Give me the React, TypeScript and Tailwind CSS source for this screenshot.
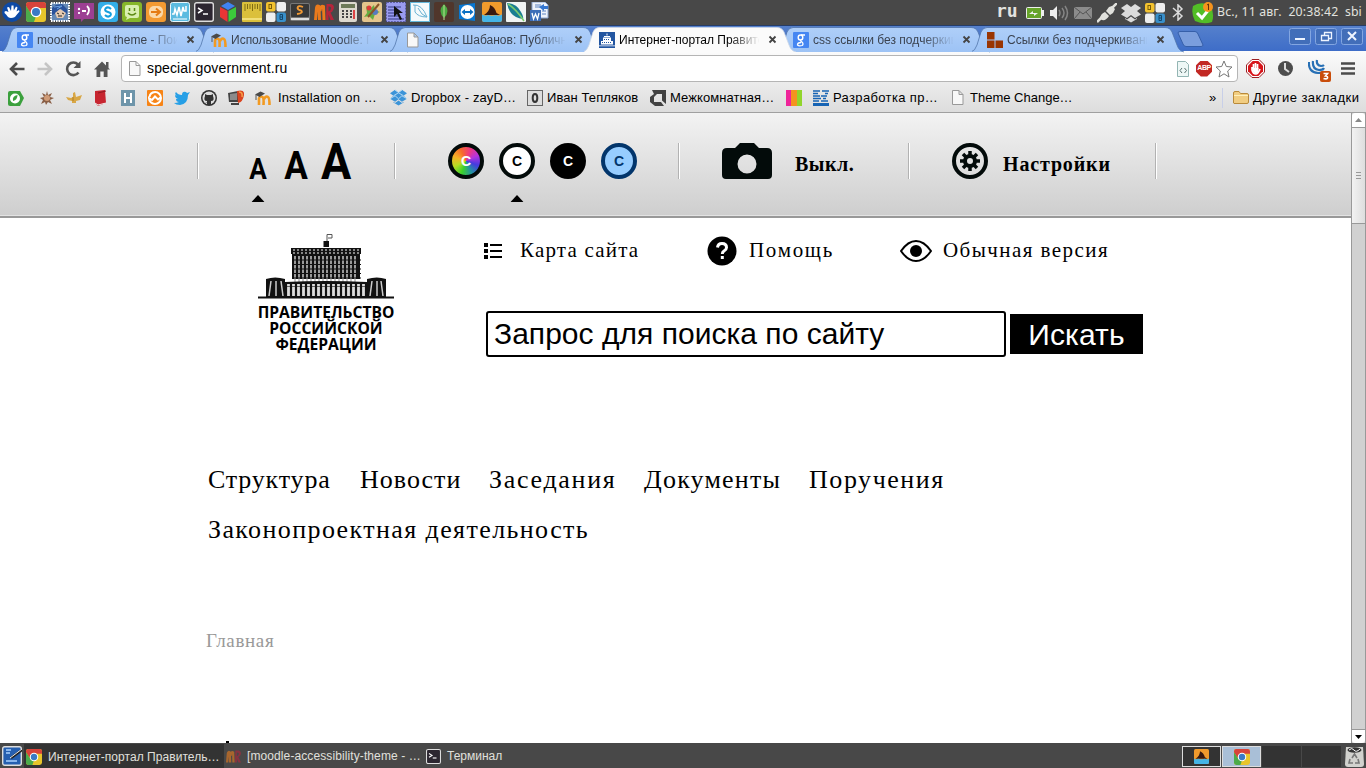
import React from "react";

type IconProps = { children: React.ReactNode; className?: string; box?: string };

const Icon = ({ children, className = "", box = "0 0 20 20" }: IconProps) => (
  <svg viewBox={box} className={`shrink-0 ${/(^| )(size|h)-/.test(className) ? "" : "size-5"} ${className}`} fill="none">{children}</svg>
);

const ChromeLogo = () => (
  <>
    <rect width="20" height="20" rx="3" fill="#e8c52b" />
    <path d="M0 3Q0 0 3 0H17Q20 0 20 3V6H10L5 12L0 4Z" fill="#d8433a" />
    <path d="M0 4L6 13L10 14L8 20H3Q0 20 0 17Z" fill="#4cab4b" />
    <circle cx="10" cy="10" r="5.3" fill="#fff" />
    <circle cx="10" cy="10" r="4" fill="#3b7ac5" />
  </>
);

const Terminal = () => (
  <>
    <rect x=".7" y=".7" width="18.6" height="18.6" rx="2" fill="#2c2630" stroke="#ddd" strokeWidth="1.4" />
    <path d="M4 6l4 2.5L4 11" stroke="#fff" strokeWidth="1.5" />
    <path d="M9 12h5" stroke="#fff" strokeWidth="1.5" />
  </>
);

const MoodleR = () => (
  <>
    <path d="M1.500 18L2.500 6Q3 3 5 4.500L5.500 18M6 9Q7 3 9.500 4.500L10 18" stroke="#e97a1c" strokeWidth="3" />
    <path d="M12.500 2H17Q21 3 19.500 7.500Q18.500 10 16.500 10.500L20 18H16.500L14.500 12.500V18H12ZM14.500 4.500V9.500Q17.500 8.500 17 5.500Q16.500 4.500 14.500 4.500" fill="#b5243b" />
  </>
);

const SharkFin = () => (
  <>
    <rect width="20" height="20" rx="2" fill="#f09a2c" />
    <path d="M2 13Q8 9 8 3Q13 5 14.500 11L18 13Z" fill="#3a1a10" />
    <path d="M0 12.500Q3 14.500 6 13Q10 14.500 14 13Q17 14.500 20 12.500V18Q20 20 18 20H2Q0 20 0 18Z" fill="#45b4e6" />
  </>
);

const MoodleHat = () => (
  <>
    <path d="M4 15V8.500Q5 5.500 7.500 7Q9 8 8.500 15M9 9Q11 5.500 13 7Q14.500 8 14.500 15" stroke="#f29a21" strokeWidth="2.600" />
    <path d="M0 4.500L5.500 1.500L10 3.500L4.500 7Z" fill="#4a4a4a" />
    <path d="M1 5V10" stroke="#555" />
  </>
);

const PageIcon = () => (
  <path d="M.5.5H7L11 4.500V14.500H.5ZM7 .5V4.500H11" fill="#f8f8f8" stroke="#999" />
);

const Cow = () => (
  <>
    <rect width="9.500" height="9.500" rx="2" fill="#f3c22f" />
    <rect x="10.500" width="9.500" height="9.500" rx="2" fill="#eee" />
    <rect y="10.500" width="9.500" height="9.500" rx="2" fill="#eee" />
    <rect x="10.500" y="10.500" width="9.500" height="9.500" rx="2" fill="#3990cb" />
    <rect x="3" y="2.500" width="2.500" height="4" stroke="#7b5d07" />
    <path d="M14 12.500h2.500v5H14zM14 15h2.500" stroke="#15466b" />
  </>
);

const DropboxShape = ({ fill }: { fill: string }) => (
  <path d="M6 1L0 5L4 8L0 11.500L6 15L10 12L14 15L20 11.500L16 8L20 5L14 1L10 4ZM4 15V16L10 19.500L16 16V15L14 16.500L10 13.500L6 16.500Z" fill={fill} />
);

const launchers: React.ReactNode[] = [
  <>
    <circle cx="10" cy="10" r="10" fill="#0d4aa6" />
    <path d="M2.500 11Q2 9 4 9L6.500 10L5 5.500L7 5L9 9L9.500 3.500L11.500 3.500L11.800 8.500L14 4.500L15.500 5.500L14.500 9.500L17 8L17.500 9.500L14.500 13Q13 16 9 16Q6 16 4.500 13Z" fill="#fff" />
  </>,
  <ChromeLogo />,
  <>
    <rect x="1" y="1" width="18" height="18" fill="#6488b5" stroke="#fff" strokeWidth="2" strokeDasharray="1.500 1" />
    <path d="M2 6L6 3L12 2L17 7L17 12L11 7L5 12L2 13Z" fill="#2a529b" />
    <path d="M5 11L10 7L16 11L13 16L7 16Z" fill="#e4c9b0" />
    <path d="M7 11l2 1m3-1l2 1M8 14h4" stroke="#222" />
    <path d="M4 5L12 4L7 7" stroke="#6fa3e0" />
  </>,
  <>
    <path d="M0 1H20V17H10L7 20V17H0Z" fill="#9c3f93" />
    <circle cx="5" cy="7" r="1.200" fill="#fff" /><path d="M5 10v2M8 9h4M13 4q4 4 0 9" stroke="#fff" strokeWidth="1.800" />
  </>,
  <>
    <rect width="20" height="20" rx="3" fill="#34aee8" />
    <circle cx="10" cy="10" r="7.500" fill="#fff" />
    <path d="M13 7Q10 4 7.500 6.500Q6 9 10 10Q14 11 12.500 13.500Q10 16 7 13" stroke="#169fdd" strokeWidth="2" />
  </>,
  <>
    <rect width="20" height="20" rx="3" fill="#86b62a" />
    <path d="M3 5Q3 3 5 3H15Q17 3 17 5V14Q17 16 15 16H8L4 18L5 15Q3 15 3 13Z" fill="#d9efb1" />
    <path d="M7.500 6v3m5-3v3M6 11q4 4 8 0" stroke="#5b8a13" strokeWidth="1.500" />
  </>,
  <>
    <rect width="20" height="20" rx="3" fill="#f39a31" />
    <rect x="3" y="4" width="14" height="12" rx="5" fill="#fbd9a9" />
    <path d="M5 10h8M10 6.500L14 10L10 13.500" stroke="#e57b12" strokeWidth="2" />
  </>,
  <>
    <rect x=".5" y=".5" width="19" height="19" rx="2" fill="#5bbbe0" stroke="#e7f6fc" />
    <path d="M2 12H4L5 7L7 13L9 5L11 14L13 5L14 9H16V4" stroke="#fff" strokeWidth="1.500" /><path d="M3 17h14" stroke="#fff" />
  </>,
  <Terminal />,
  <>
    <path d="M10 0L17 4L10 8L3 4Z" fill="#3f83f2" />
    <path d="M2 5L9.500 9V20L2 15Z" fill="#e93535" />
    <path d="M18 5L10.500 9V20L18 15Z" fill="#3ccb3b" />
  </>,
  <>
    <rect width="20" height="20" rx="1" fill="#dbc03b" />
    <path d="M3 2v7M5.500 2v5M8 2v5M10.500 2v7M13 2v5M15.500 2v5M18 2v7" stroke="#806c12" />
    <path d="M0 17h20" stroke="#f1df78" strokeWidth="2" />
  </>,
  <Cow />,
  <>
    <rect y="1" width="20" height="18" rx="2" fill="#777" /><rect x="1" y="2" width="18" height="13" rx="1" fill="#373737" />
    <path d="M13 5Q8 3 7.500 6Q8 8 11 8.500Q14 11 7 12" stroke="#f39a33" strokeWidth="1.800" /><path d="M1 17h18" stroke="#ddd" strokeWidth="2" />
  </>,
  <MoodleR />,
  <>
    <rect x="1" width="18" height="20" rx="2" fill="#ddd9cf" /><rect x="3" y="2" width="14" height="4" fill="#6d7958" />
    <path d="M4 9h2m2 0h2m2 0h2M4 12h2m2 0h2m2 0h2M4 15h2m2 0h2m2 0h2" stroke="#444" strokeWidth="1.800" /><path d="M16 8v9" stroke="#d44" strokeWidth="2" />
  </>,
  <>
    <rect width="20" height="20" rx="2" fill="#e4c58c" />
    <path d="M4 4l4 3 4-4 1 5 5 2-5 2-2 6-4-4-5 1 3-4z" fill="#65ad42" /><circle cx="7" cy="6" r="2.500" fill="#dd3a37" /><circle cx="13" cy="10" r="3" fill="#557bc0" /><path d="M6 15L17 2" stroke="#8a5426" strokeWidth="2" />
  </>,
  <>
    <rect width="20" height="20" rx="1" fill="#9a9cf0" stroke="#24245c" strokeDasharray="2 1" />
    <path d="M2 5h13M2 8h7M2 11h8M2 14h10M2 17h16" stroke="#333982" /><path d="M8 4L17 11H13L16 17L14 18L11 12L8 15Z" fill="#111" />
  </>,
  <>
    <rect x=".5" y=".5" width="19" height="19" fill="#f5fafb" stroke="#65b7da" />
    <path d="M3 3Q12 2 17 15L12 12M5 3V10Q8 15 17 15M8 6L12 12" stroke="#6ab3d3" />
  </>,
  <>
    <rect width="20" height="20" rx="2" fill="#50362b" /><path d="M10 2Q17 9 10 16Q3 9 10 2Z" fill="#4cab42" /><path d="M10 3V18" stroke="#b9dd93" />
  </>,
  <>
    <path d="M1 3L17 1V19L1 17Z" fill="#0878d3" /><circle cx="9.500" cy="10" r="7" fill="#fff" />
    <path d="M3.500 10L7 7V9H12V7L15.500 10L12 13V11H7V13Z" fill="#0b71c4" />
  </>,
  <SharkFin />,
  <>
    <rect width="20" height="20" rx="1" fill="#f1f4f3" /><path d="M1 1Q11 2 15 10Q18 15 17 17Q9 16 5 11Q2 7 1 1Z" fill="#197e91" /><path d="M2 2Q10 7 18 19" stroke="#7acb6e" strokeWidth="1.500" />
  </>,
  <>
    <path d="M2 0H15L18 3V16H2Z" fill="#eef3fb" stroke="#8ca5cf" /><path d="M5 3h6M5 5h8M12 9h4M12 12h4" stroke="#5d83c0" />
    <rect y="8" width="11" height="11" fill="#3d6eb8" /><path d="M2 11l1.500 6L5.500 12L7.500 17L9 11" stroke="#fff" strokeWidth="1.300" /><path d="M9 5l5-3v2h4v3h-4v2z" fill="#3476d0" />
  </>,
];

const GoogleG = () => (
  <>
    <rect width="16" height="16" rx="1" fill="#4586f2" />
    <ellipse cx="7.500" cy="5.500" rx="2.300" ry="2.500" stroke="#fff" strokeWidth="1.400" />
    <path d="M8 3h4M8 8Q7 9 9 10Q11 12 9 13.500Q6 14.500 4.500 13Q4.500 10.500 8 10.500" stroke="#fff" strokeWidth="1.300" />
  </>
);

const GovIcon = () => (
  <>
    <rect width="16" height="16" fill="#2255a0" />
    <path d="M7.500 1.500h1v2h-1zM5 4h6v1H5zM4 5.500h8v4H4zM2 9h12v3.500H2zM0 13.500h16v.8H0z" fill="#fff" />
    <path d="M5 7.500h6M3 10.500h10" stroke="#2255a0" strokeDasharray="1 1" />
  </>
);

const Blocks = () => <path d="M0 0H7.500V7.500H0ZM0 8.500H7.500V16H0ZM8.500 8.500H16V16H8.500Z" fill="#993502" />;

const tabs = [
  { label: "moodle install theme - Поиск", icon: <GoogleG />, box: "0 0 16 16" },
  { label: "Использование Moodle: Про", icon: <MoodleHat />, box: "0 0 16 16" },
  { label: "Борис Шабанов: Публичные", icon: <PageIcon />, box: "-2 0 16 15" },
  { label: "Интернет-портал Правител", icon: <GovIcon />, box: "0 0 16 16", active: true },
  { label: "css ссылки без подчеркива", icon: <GoogleG />, box: "0 0 16 16" },
  { label: "Ссылки без подчеркивания", icon: <Blocks />, box: "0 0 16 16" },
];

const Tab = ({ tab }: { tab: (typeof tabs)[number] }) => (
  <div className={`relative flex h-[25px] w-[194px] shrink-0 items-center pl-3 ${tab.active ? "z-10" : ""}`}>
    <svg className="absolute top-0 -left-[3px] h-[26px] w-[214px]" viewBox="0 0 214 26" fill="none">
      <defs>
        <linearGradient id="tabBlue" x1="0" y1="0" x2="0" y2="1"><stop stopColor="#afcff9" /><stop offset="1" stopColor="#9dc3f5" /></linearGradient>
      </defs>
      <path d="M-1 25Q3 24 5 18L9 5Q11 .5 15 .5H193Q198 .5 200 5L205 18Q207 24 212 25" fill={tab.active ? "#fbfbfb" : "url(#tabBlue)"} stroke={tab.active ? "#cfd8e5" : "#4d71a7"} strokeOpacity=".75" />
      {tab.active && <path d="M0 25.500H213" stroke="#fbfbfb" />}
    </svg>
    <Icon className="relative size-4" box={tab.box}>{tab.icon}</Icon>
    <span className={`relative ml-1 w-[140px] overflow-hidden text-[12px] leading-4 whitespace-nowrap [mask-image:linear-gradient(to_right,black_110px,transparent_141px)] ${tab.active ? "text-black" : "text-[#3b4350]"}`}>{tab.label}</span>
    <Icon className="relative ml-[9px] size-[9px]" box="0 0 9 9"><path d="M1.500 1.500L7.500 7.500M7.500 1.500L1.500 7.500" stroke="#444" strokeWidth="1.800" /></Icon>
  </div>
);

const SystemPanel = () => (
  <div className="flex h-[25px] items-center bg-[#484848] pl-0.5 text-[#e2e2df]">
    <div className="-mt-px flex w-[994px] shrink-0 gap-1">{launchers.map((art, i) => <Icon key={i}>{art}</Icon>)}</div>
    <span className="w-[30px] shrink-0 pb-[3px] font-['DejaVu_Sans_Mono',monospace] text-[18px] leading-5 font-bold">ru</span>
    <Icon className="h-3 w-[18px]" box="0 0 18 12"><rect x=".5" y=".5" width="15" height="11" rx="1" fill="#67a42a" stroke="#eee" /><path d="M16 3h2v6h-2M3 7l4-3v2h5L8 9V7z" fill="#eee" /></Icon>
    <Icon className="ml-1.5 h-4 w-[19px]" box="0 0 19 16"><path d="M0 5h3l4-4v14l-4-4H0z" fill="#eee" /><path d="M9 5q2 3 0 6M12 3q4 5 0 10M15 1q5 7 0 14" stroke="#858585" strokeWidth="1.500" /></Icon>
    <Icon className="ml-[5px] h-3 w-[18px]" box="0 0 18 12"><rect width="18" height="12" fill="#8b8b8b" /><path d="M0 0l9 7 9-7M0 12l6-7m12 7l-6-7" stroke="#555" /></Icon>
    <Icon className="ml-[5px]"><path d="M0 19l5-5M15 5l5-5" stroke="#e1e1dc" strokeWidth="2.500" /><path d="M3 16q0-5 5-7l4 4q-3 5-7 4zM9 8l3-4 3-1 3 3-2 4-3 2z" fill="#e1e1dc" /></Icon>
    <Icon className="ml-1"><DropboxShape fill="#dcdcdc" /></Icon>
    <Icon className="ml-1"><Cow /></Icon>
    <Icon className="ml-1.5 h-[17px] w-[14px]" box="0 0 14 17"><path d="M2 4l9 8-4 4V1l4 4-9 8" stroke="#ddd" strokeWidth="1.500" /></Icon>
    <Icon className="ml-[7px] size-[22px]" box="0 0 22 22"><path d="M1 4Q8-1 18 3Q23 11 20 20Q12 23 3 19Q-1 12 1 4Z" fill="#52bd26" /><path d="M5 11l5 5 8-10" stroke="#fff" strokeWidth="3" /><circle cx="16" cy="5" r="5" fill="#f6931d" /><path d="M15 3l1.500-1v6" stroke="#663209" /></Icon>
    <span className="ml-[3px] w-[128px] shrink-0 pb-0.5 font-['Noto_Sans',sans-serif] text-[12.3px] leading-5 tracking-[.14px] whitespace-pre">Вс., 11 авг.  20:38:42</span>
    <span className="pb-0.5 font-['Noto_Sans',sans-serif] text-[12.300px] leading-5">sbi</span>
  </div>
);

const TabStrip = () => (
  <div className="flex h-[26px] border-t border-[#263d68] bg-linear-to-b from-[#5580cc] to-[#3e6dc8] pt-px pl-[5px]">
    {tabs.map((t) => <Tab key={t.label} tab={t} />)}
    <Icon className="mt-1 ml-2 h-4 w-[28px]" box="0 0 28 16"><path d="M3 .5H18Q20 .5 21 3L26 14Q26 15.500 24 15.500H9Q7 15.500 6 13L1 2Q1 .5 3 .5Z" fill="#7b9edd" stroke="#365fa9" /></Icon>
    <div className="mt-px ml-auto flex gap-1 pr-[3px]">
      {["M6 11H16", "M6.500 7.500H13.500V12.500H6.500ZM9.500 7V4.500H16.500V10.500H14", "M7 4L15 12M15 4L7 12"].map((d, i) => (
        <Icon key={d} className="h-[17px] w-[22px]" box="0 0 22 17"><rect x=".5" y=".5" width="21" height="16" rx="2" fill="#426eb9" stroke="#83a6e1" /><path d={d} stroke="#eef4ff" strokeWidth={i === 1 ? 1.3 : 2} /></Icon>
      ))}
    </div>
  </div>
);

const AddressRow = () => (
  <div className="flex h-[35px] items-center pl-2">
    <Icon className="h-4 w-[18px]" box="0 0 18 16"><path d="M16.500 8H3M9 2L3 8L9 14" stroke="#4b4b4b" strokeWidth="2.600" /></Icon>
    <Icon className="ml-2.5 h-4 w-[18px]" box="0 0 18 16"><path d="M1.500 8H15M9 2L15 8L9 14" stroke="#c5c5c5" strokeWidth="2.600" /></Icon>
    <Icon className="ml-2.5 size-[18px]" box="0 0 18 18"><path d="M14.500 12.500A6.300 6.300 0 1 1 14 4.500" stroke="#555" strokeWidth="2.600" /><path d="M16.500 1V8H9.500Z" fill="#555" /></Icon>
    <Icon className="ml-3 size-4" box="0 0 16 16"><path d="M8 .5L16 8.500H13.500V16H9.700V10.500H6.300V16H2.500V8.500H0Z M12 1h2.500v6L12 5z" fill="#555" /></Icon>
    <div className="ml-[11px] flex h-[27px] w-[1117px] items-center rounded-[4px] border border-[#b5b5b5] bg-white pr-1 pl-[7px]">
      <Icon className="h-[15px] w-3" box="0 0 12 15"><PageIcon /></Icon>
      <span className="ml-1.5 pb-0.5 text-[14px] leading-5 tracking-[.13px] text-black">special.government.ru</span>
      <Icon className="ml-auto h-4 w-3" box="0 0 12 16"><path d="M.5.5H8.500L11.500 3.500V15.500H.5Z" fill="#eef7f6" stroke="#93b5b3" /><path d="M5 7L3 9.500L5 12M7.500 7L9.500 9.500L7.500 12" stroke="#59706e" /></Icon>
      <span className="ml-[7px] flex size-4 items-center justify-center bg-[#c22823] text-[7px] font-bold tracking-[-.5px] text-white [clip-path:polygon(30%_0,70%_0,100%_30%,100%_70%,70%_100%,30%_100%,0_70%,0_30%)]">ABP</span>
      <Icon className="ml-[3px] size-[18px]" box="0 0 18 18"><path d="M9 1L11.300 6.500L17 7L12.700 11L14 17L9 13.800L4 17L5.300 11L1 7L6.700 6.500Z" fill="#fff" stroke="#777" /></Icon>
    </div>
    <Icon className="ml-2 size-[19px]" box="0 0 19 19"><path d="M6 .5H13L18.500 6V13L13 18.500H6L.5 13V6Z" fill="#fff" stroke="#9c2024" /><path d="M6.700 2H12.300L17 6.700V12.300L12.300 17H6.700L2 12.300V6.700Z" fill="#d7141a" /><path d="M6 8v3q1 4 4 4 2 0 4-5M7.500 10V5M9.500 9V4M11.500 10V5" stroke="#fff" strokeWidth="1.700" /><path d="M6.500 9h6v4l-3 2-3-3z" fill="#fff" /></Icon>
    <Icon className="ml-3 size-[17px]" box="0 0 17 17"><circle cx="8.500" cy="8.500" r="7.500" fill="#4d4d4d" /><path d="M8 3v6l4 3" stroke="#ddd" strokeWidth="2" /></Icon>
    <Icon className="mt-1 ml-3.5 h-[23px] w-[23px]" box="0 0 23 23"><path d="M1 3q-1 10 9 11 5 0 6-2M5 2q-1 8 6 9 4 0 5-2M9 1q-1 5 4 6 2 0 3-1" stroke="#2870b5" strokeWidth="2.200" /><rect x="12" y="12" width="11" height="11" rx="2" fill="#c94d0b" /><path d="M15.500 14.500h4l-2 2.500q2.500 0 2 2-1 1.500-4 .5" stroke="#fff" strokeWidth="1.600" /></Icon>
    <Icon className="ml-2.5 h-[13px] w-[14px]" box="0 0 14 13"><path d="M0 1.500H14M0 6.500H14M0 11.500H14" stroke="#4b4b4b" strokeWidth="2.700" /></Icon>
  </div>
);

const smallMarks: React.ReactNode[] = [
  <><path d="M2 1H12L16 8L12 16H2Q0 16 0 14V3Q0 1 2 1" fill="#3ba03d" /><circle cx="7" cy="8.500" r="5" fill="#fff" /><path d="M9.500 5Q4 6 5 11Q9.500 10 9.500 5M4.500 12L7 9" fill="#3ba03d" /></>,
  <><path d="M8 1l1 4 4-2-2 4 4 1-4 2 2 4-4-2-2 3-1-3-4 2 2-4-3-2 4-1-2-4 4 2z" fill="#895e45" /><circle cx="8" cy="8" r="3" fill="#cf9b77" /></>,
  <><path d="M0 7l5 1 2-1V3l2-1 1 5 6-2-2 5-4 1v2H6v-2l-4-1z" fill="#d8a746" /><path d="M7 7v4" stroke="#b37d21" /></>,
  <><path d="M2 1L12 0L13 13L5 16L2 13Z" fill="#c72530" /><path d="M2 13L5 15L13 13" stroke="#eee" /><path d="M5 3L13 1" stroke="#8d1a22" /></>,
  <><rect x="1" width="14" height="16" fill="#6e95aa" /><path d="M5 3v10M11 3v10M5 8h6" stroke="#fff" strokeWidth="2" /></>,
  <><rect width="16" height="16" rx="1" fill="#f78416" /><path d="M8 2A6 6 0 1 1 2 8L5 10L8 6.500L11 9.500L14 7" stroke="#fff" strokeWidth="2" /><path d="M2.500 7Q3 2.500 8 2" stroke="#fff" strokeWidth="2" /></>,
  <path d="M0 13Q3 13 5 12Q2 12 2 9H4Q1 8 1 5L3 6Q0 4 2 2Q4 5 8 5Q8 1 12 2L13 3L16 2L14 5Q14 14 6 15Q2 15 0 13Z" fill="#269fe6" />,
  <><circle cx="8" cy="8" r="8" fill="#333" /><circle cx="8" cy="8" r="6.500" fill="#ddd" /><path d="M4 4L6 5H10L12 4V6Q14 11 10 11V15H6V13L4 12L6 12.500V11Q2 11 4 6Z" fill="#333" /></>,
  <><path d="M0 3L10 1V12L1 12Z" fill="#444" /><path d="M2 4L9 3V10L2 10Z" fill="#8b8b8b" /><path d="M9 1q8-2 7 4-1 7-6 8z" fill="#da4420" /><path d="M11 2q4 0 3 5" stroke="#f6a24a" strokeWidth="1.500" /><path d="M3 14h8" stroke="#444" strokeWidth="2" /></>,
  <MoodleHat />,
];

const markText = "shrink-0 whitespace-nowrap text-[13px] leading-4 text-black";

const BookmarkBar = () => (
  <div className="flex h-[26px] items-center pb-[3px] pl-2">
    <Icon className="mr-[15px] size-4" box="0 0 16 16">{smallMarks[0]}</Icon>
    <div className="flex shrink-0 gap-[11px]">{smallMarks.slice(1).map((m, i) => <Icon key={i} className="size-4" box="0 0 16 16">{m}</Icon>)}</div>
    <span className={`ml-[7px] w-[112px] tracking-[.12px] ${markText}`}>Installation on …</span>
    <Icon className="size-[17px]"><DropboxShape fill="#3c94d8" /><path d="M6 1.500L10 4L14 1.500M0 11.500L6 8L10 11.500L14 8L20 11.500M4 8L10 4.500L16 8" stroke="#c3e2f7" /></Icon>
    <span className={`ml-[4px] w-[116px] tracking-[.12px] ${markText}`}>Dropbox - zayD…</span>
    <Icon className="size-4" box="0 0 16 16"><rect x=".5" y=".5" width="15" height="15" fill="#ddd" stroke="#666" /><ellipse cx="8" cy="8" rx="2.300" ry="4" stroke="#333" strokeWidth="2" /></Icon>
    <span className={`ml-1 w-[103px] tracking-[.08px] ${markText}`}>Иван Тепляков</span>
    <Icon className="size-4" box="0 0 16 16"><path d="M2 0H16V14L12 10.500V4H7L4 7V12H11L14 16H5L0 12V7L4 4Z" fill="#424242" /></Icon>
    <span className={`ml-1 w-[116px] tracking-[.08px] ${markText}`}>Межкомнатная…</span>
    <Icon className="size-4" box="0 0 16 16"><path d="M0 0h5v16H0z" fill="#ef249a" /><path d="M5 0h6v16H5z" fill="#f49320" /><path d="M11 0h5v16h-5z" fill="#91d52c" /></Icon>
    <Icon className="ml-[11px] size-4" box="0 0 16 16"><path d="M0 1h7M0 3.500h5M0 6h7M0 8.500h8M0 11h6M9 1h7M12 3.500h3M8 6h6M10 8.500h3M8 11h7" stroke="#1764b4" strokeWidth="1.500" /><path d="M0 13h16v3H0z" fill="#1764b4" /></Icon>
    <span className={`ml-1 w-[119px] tracking-[.35px] ${markText}`}>Разработка пр…</span>
    <Icon className="h-[15px] w-3" box="0 0 12 15"><PageIcon /></Icon>
    <span className={`ml-1.5 w-[239px] ${markText}`}>Theme Change…</span>
    <span className="w-[13px] shrink-0 text-[13px] leading-4">»</span>
    <i className="h-5 w-px shrink-0 bg-[#c8cfe8]" />
    <Icon className="ml-[10px] h-[13px] w-4" box="0 0 16 13"><path d="M.5 12V2Q.5.5 2 .5H6L7.500 2.500H14Q15.500 2.500 15.500 4V11Q15.500 12.500 14 12.500H1Z" fill="#f1cd82" stroke="#b98a3b" /><path d="M1 4.500h14" stroke="#fff0bb" /></Icon>
    <span className={`ml-1 tracking-[.45px] ${markText}`}>Другие закладки</span>
  </div>
);

const BrowserChrome = () => (
  <>
    <TabStrip />
    <div className="h-[62px] border-b border-[#a0a0a0] bg-linear-to-b from-[#fbfbfb] to-[#dddddd]">
      <AddressRow />
      <BookmarkBar />
    </div>
  </>
);

const Divider = () => <i className="h-9 w-0.5 shrink-0 border-r border-l border-r-white border-l-[#b2b2b2]" />;
const Pointer = () => <svg className="absolute top-[52px] left-1/2 h-[7px] w-[13px] -translate-x-1/2" viewBox="0 0 13 7"><path d="M6.500 0L13 7H0Z" fill="#000" /></svg>;
const letter = "absolute left-1/2 -translate-x-1/2 scale-x-90 font-['Roboto',sans-serif] font-bold text-black";

const AccessibilityBar = () => (
  <div className="flex h-[105px] items-start border-b-2 border-[#999] bg-linear-to-b from-[#f3f3f3] to-[#cecece] pt-[30px] pl-[197px] shadow-[inset_0_-1px_0_#e3e3e3]">
    <Divider />
    <div className="ml-[50px] flex h-9">
      <div className="relative w-[18px]"><b className={`${letter} -bottom-[2px] text-[29px] leading-[23px]`}>A</b><Pointer /></div>
      <div className="relative ml-[17px] w-6"><b className={`${letter} -bottom-[3px] text-[39px] leading-[31px]`}>A</b></div>
      <div className="relative ml-[13px] w-[30px]"><b className={`${letter} -bottom-[3px] text-[50px] leading-[40px]`}>A</b></div>
    </div>
    <i className="w-[43px]" /><Divider />
    <div className="ml-[52px] flex gap-[15px] text-[14px] font-bold">
      <div className="flex size-9 items-center justify-center rounded-full border-4 border-[#030b0a] bg-[conic-gradient(from_20deg,#f03980,#b333e0,#453be0,#2394a0,#3bd32b,#b7dc23,#f5b326,#f76a2c,#f03980)] text-white">C</div>
      <div className="relative"><div className="flex size-9 items-center justify-center rounded-full border-4 border-[#030b0a] bg-white text-black">C</div><Pointer /></div>
      <div className="flex size-9 items-center justify-center rounded-full bg-black text-white">C</div>
      <div className="flex size-9 items-center justify-center rounded-full border-4 border-[#02356b] bg-[#97cdff] text-[#02356b]">C</div>
    </div>
    <i className="w-[41px]" /><Divider />
    <Icon className="ml-[42px] h-9 w-[50px]" box="0 0 50 36"><path fillRule="evenodd" d="M5 5H13L18 0H32L37 5H45Q50 5 50 10V32Q50 36 46 36H4Q0 36 0 32V10Q0 5 5 5ZM25 11.500A9.500 9.500 0 1 0 25 30.500A9.500 9.500 0 1 0 25 11.500Z" fill="#030b0a" /></Icon>
    <b className="mt-[7px] ml-[23px] w-[113px] font-['Liberation_Serif',serif] text-[20px] leading-7 tracking-[.5px]">Выкл.</b>
    <Divider />
    <Icon className="ml-[42px] size-9" box="0 0 36 36">
      <circle cx="18" cy="18" r="16" stroke="#030b0a" strokeWidth="4" />
      <circle cx="18" cy="18" r="5" stroke="#030b0a" strokeWidth="4" />
      <path d="M18 8V13M18 23V28M8 18H13M23 18H28M11 11L14.500 14.500M21.500 21.500L25 25M11 25L14.500 21.500M21.500 14.500L25 11" stroke="#030b0a" strokeWidth="3.500" />
    </Icon>
    <b className="mt-[7px] ml-[15px] w-[152px] font-['Liberation_Serif',serif] text-[20px] leading-7 tracking-[.85px]">Настройки</b>
    <Divider />
  </div>
);

const GovernmentLogo = () => (
  <div className="flex w-[136px] flex-col items-center font-['Open_Sans',sans-serif] text-[15.600px] leading-[16px] font-bold text-black">
    <svg className="h-[66px] w-[136px]" viewBox="0 0 136 66" fill="none">
      <path d="M69 9V0.500H74V4H70" stroke="#555" /><path d="M65.500 7h5.500v6h-5.500z" fill="#111" />
      <path d="M33 14H103V20H102V45H34V20H33Z" fill="#111" />
      <path d="M36 15V20M40 15V20M44 15V20M48 15V20M52 15V20M56 15V20M60 15V20M64 15V20M68 15V20M72 15V20M76 15V20M80 15V20M84 15V20M88 15V20M92 15V20M96 15V20M100 15V20" stroke="#aaa" strokeWidth="1.500" />
      <path d="M37 22V48M41 22V48M45 22V48M49 22V48M53 22V48M57 22V48M61 22V48M65 22V48M69 22V48M73 22V48M77 22V48M81 22V48M85 22V48M89 22V48M93 22V48M97 22V48" stroke="#bbb" strokeWidth="1.600" />
      <path d="M34 17.500H103M34 26H103M34 30.500H103M34 35H103M34 39.500H103M34 44H103" stroke="#111" />
      <path d="M8 45Q17 42 27 45V64H8ZM109 45Q119 42 128 45V64H109Z" fill="#111" />
      <path d="M13 47L11 62M18 47V62M23 47L25 62M114 47L112 62M119 47V62M123 47L125 62" stroke="#ccc" strokeWidth="1.500" />
      <path d="M27 48Q68 46 109 48V64H27Z" fill="#111" />
      <path d="M30.500 50V62M35.500 50V62M40.500 50V62M45.500 50V62M50.500 50V62M55.500 50V62M60.500 50V62M65.500 50V62M70.500 50V62M75.500 50V62M80.500 50V62M85.500 50V62M90.500 50V62M95.500 50V62M100.500 50V62M105.500 50V62" stroke="#ddd" strokeWidth="2.800" />
      <path d="M27 52.500H109" stroke="#111" strokeWidth=".6" />
      <path d="M0 63.500H136" stroke="#111" strokeWidth="2" />
    </svg>
    <div className="pt-[4px] whitespace-nowrap">ПРАВИТЕЛЬСТВО</div>
    <div>РОССИЙСКОЙ</div>
    <div>ФЕДЕРАЦИИ</div>
  </div>
);

const QuickLinks = () => (
  <div className="flex h-[30px] items-center font-['Liberation_Serif',serif] text-[21px] leading-[28px] tracking-[1.200px] whitespace-nowrap">
    <Icon className="h-4 w-[18px]" box="0 0 18 16"><path d="M0 0h4v4H0zM6 1h12v2H6zM0 6h4v4H0zM6 7h12v2H6zM0 12h4v4H0zM6 13h12v2H6z" fill="#000" /></Icon>
    <span className="ml-[18px] w-[187px] pb-0.5">Карта сайта</span>
    <Icon className="size-[30px]" box="0 0 30 30"><circle cx="15" cy="15" r="14.500" fill="#000" /><path d="M10.500 11.500Q11 7.500 15 7.500Q19.500 7.500 19.500 11.500Q19.500 13.500 17 15Q15.300 16 15.300 18" stroke="#fff" strokeWidth="3" /><path d="M13.800 20h3v3h-3z" fill="#fff" /></Icon>
    <span className="ml-3 w-[151px] pb-0.5 tracking-[1.700px]">Помощь</span>
    <Icon className="h-[22px] w-8" box="0 0 32 22"><path d="M1 11Q8 1 16 1Q24 1 31 11Q24 21 16 21Q8 21 1 11Z" stroke="#000" strokeWidth="2" /><circle cx="16" cy="11" r="6" fill="#000" /></Icon>
    <span className="ml-[11px] pb-0.5 tracking-[1.450px]">Обычная версия</span>
  </div>
);

const SiteSearch = () => (
  <div className="mt-[45px] ml-0.5 flex items-center gap-1 text-[30px] leading-10">
    <div className="h-[46px] w-[520px] rounded-[3px] border-2 border-black bg-white pt-px pl-[6px] tracking-[.03px] text-black">Запрос для поиска по сайту</div>
    <div className="h-10 w-[133px] bg-black pt-px text-center tracking-[.1px] text-white">Искать</div>
  </div>
);

const PortalPage = () => (
  <main className="h-[630px] w-[1351px] overflow-hidden bg-white text-black">
    <AccessibilityBar />
    <div className="flex h-[237px] pt-[16px] pl-[258px]">
      <GovernmentLogo />
      <div className="ml-[90px] pt-0.5"><QuickLinks /><SiteSearch /></div>
    </div>
    <nav className="flex flex-wrap pl-[208px] font-['Liberation_Serif',serif] text-[26px] leading-[50px] tracking-[.7px] whitespace-nowrap">
      <span className="w-[152px] tracking-[.820px]">Структура</span>
      <span className="w-[129px] tracking-[1px]">Новости</span>
      <span className="w-[155px] tracking-[1.700px]">Заседания</span>
      <span className="w-[165px] tracking-[1.200px]">Документы</span>
      <span className="w-[500px] tracking-[1.550px]">Поручения</span>
      <span className="tracking-[1.400px]">Законопроектная деятельность</span>
    </nav>
    <div className="pt-[72px] pl-[206px] font-['Liberation_Serif',serif] text-[19px] leading-7 tracking-[.65px] text-[#999]">Главная</div>
    <i className="mt-[86px] ml-[226px] block h-0.5 w-[3px] bg-black" />
  </main>
);

const Scrollbar = () => (
  <div className="flex w-[15px] flex-col border-x border-[#999] bg-[#d1d1d1]">
    <div className="flex h-[14px] items-center justify-center rounded-t-[3px] bg-white"><Icon className="h-1 w-[7px]" box="0 0 7 4"><path d="M3.500 0L7 4H0Z" fill="#888" /></Icon></div>
    <div className="flex h-[97px] flex-col items-center justify-center gap-0.5 border-y border-[#999] bg-linear-to-r from-[#f2f2f2] to-[#dedede]">
      <i className="h-px w-[5px] bg-[#999]" /><i className="h-px w-[5px] bg-[#999]" /><i className="h-px w-[5px] bg-[#999]" />
    </div>
    <div className="mt-auto flex h-[14px] items-center justify-center rounded-b-[3px] border-t border-[#999] bg-white"><Icon className="h-1 w-[7px]" box="0 0 7 4"><path d="M0 0H7L3.500 4Z" fill="#000" /></Icon></div>
  </div>
);

const Taskbar = () => (
  <div className="flex h-[25px] items-center bg-[#484848] pt-px text-[12px] leading-5 whitespace-nowrap text-[#e0e0dd]">
    <Icon className="mb-px ml-0.5"><rect x=".7" y=".7" width="18.600" height="18.600" rx="2" fill="#255fb0" stroke="#ddd" strokeWidth="1.400" /><path d="M4 4h5M4 7h4M4 15h11" stroke="#a9d2ff" strokeWidth="1.500" /><path d="M9 12L20 4" stroke="#222" strokeWidth="2.500" /><path d="M8 12L20 3" stroke="#eee" /></Icon>
    <div className="ml-0.5 flex h-6 w-[200px] shrink-0 items-center bg-[#333] pt-0.5 pl-0.5"><Icon className="size-4"><ChromeLogo /></Icon><span className="ml-1.5 tracking-[.05px]">Интернет-портал Правитель…</span></div>
    <Icon className="ml-0.5 size-[15px] opacity-60"><MoodleR /></Icon><span className="ml-1.5 w-[179px] shrink-0 tracking-[.1px]">[moodle-accessibility-theme - …</span>
    <Icon className="size-[15px]"><Terminal /></Icon><span className="ml-1.5">Терминал</span>
    <div className="ml-auto flex h-[22px] gap-px self-end pb-px">
      <div className="flex w-[39px] items-center justify-center border border-[#ddd] bg-[#333]"><Icon className="size-[15px]"><SharkFin /></Icon></div>
      <div className="flex w-[39px] items-center justify-center border border-[#ddd] bg-[#a9bfd7]"><Icon className="size-4"><ChromeLogo /></Icon></div>
      <div className="w-[39px] bg-[#333]" /><div className="w-[39px] bg-[#333]" />
    </div>
    <Icon className="mr-0.5 ml-1 h-[21px] w-[19px]" box="0 0 19 21"><path d="M1 1H18L19 18Q19 21 16 21H3Q0 21 0 18Z" fill="#d2d2ce" /><ellipse cx="9.500" cy="4" rx="7" ry="2.800" fill="#333" /><path d="M4 4q3-3 5 0t6-1" stroke="#fff" /><path d="M7 12L9.500 8L12 12M13 13L14 17H10M5 13L4 17H8" stroke="#777" strokeWidth="1.600" /></Icon>
  </div>
);

export default function App() {
  return (
    <div className="h-[768px] w-[1366px] overflow-hidden bg-white font-['Liberation_Sans',sans-serif]">
      <SystemPanel />
      <BrowserChrome />
      <div className="flex h-[630px]"><PortalPage /><Scrollbar /></div>
      <Taskbar />
    </div>
  );
}
